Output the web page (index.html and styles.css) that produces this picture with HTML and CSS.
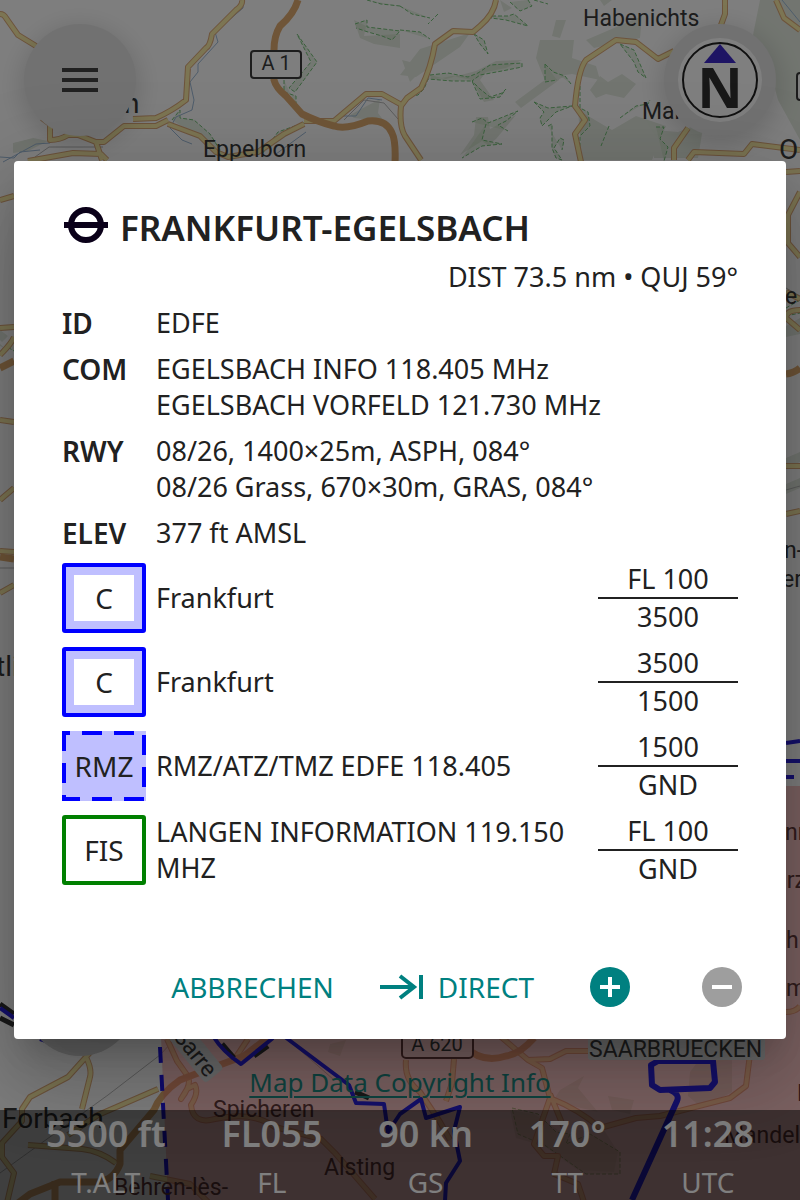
FILE: index.html
```html
<!DOCTYPE html>
<html lang="de">
<head>
<meta charset="utf-8">
<meta name="viewport" content="width=device-width, initial-scale=1">
<title>Frankfurt-Egelsbach</title>
<link rel="stylesheet" href="styles.css">
</head>
<body>
<div class="app">
  <svg class="map" viewBox="0 0 800 1200" preserveAspectRatio="xMidYMid slice" aria-hidden="true">
    <!-- woodland -->
    <g class="wood">
      <path d="M354 20l12 6-2 10 36-2v14l-26-4-14-6zM400 75l20-26 50-16-10 14-44 30zM402 60l24 6-16 16zM556 20l10 0-6 18-8-2zM586 40l56-24-2 22-46 10zM540 40l34 0-2 18 24 8 4 14-28-6-28 4-8-20zM515 102l46-34-2 12-38 28zM590 90l10-14 8 6 14-8 14 10-12 14-18-4-10 4zM760 0h40v140l-22-40-8-30-20-20zM578 110l34 20 24-14 30 10-14 34-70 0zM654 130l24 2 26-10-6 36h-44zM500 0l12 8-8 4zM600 0l12 0-8 6zM13 143l20-5 15 3-20 10-15 2zM350 115l30-16-2 14 6 8-30-3zM690 60l10 4 4-14-12 0z"/>
      <path d="M430 75l16 4 30-8 20-10 26-1-16 8-20 4-6 8 14 20-10 2-12-22-20-4-20 4zM476 117l12 0 2 12 26-14-20 24-8 6-6-4-22 14 14-20zM544 64l6 10 16 2-18 8-4-6z"/>
      <path d="M0 330l8 6-6 6-2-2zM0 344l6 5-6-3zM786 326l14-8v16l-14 3zM786 458l14-6v10l-14 6zM786 484l14-6v10l-14 6z"/>
      <path d="M560 1090l24-14-6 12 20 24-34-8-14 2zM690 1072l12-16 30-6v42l-30 16-14-12zM608 1096l26 4-4 14-18-4zM510 1110l24 4 24 16 46 0 14 22-4 20-36-2-34-24-28-8zM330 1044l16-4-6 16-12-4z"/>
    </g>
    <g class="park">
      <path d="M297 34l20 28-22 30-6-4 22-26zM367 0l14 4 19 2M355 24l12-4v7l33 4-8 9-10-4-14-4-12-4M400 6l12 8 18 4M400 30l20 2 10 7M438 14l-10 10M492 16l16 0 6-2 14 12-22-6-15-2zM510 2l10 9 12-5-4-6M534 0l14 4M474 34l10 6 4 14-8-10zM430 75l18-2 20 4 10-4 12-8 32-2v4l-20 4-22 4-8 6 8 8 10 8 12-4 4-4-6 8-20 2-8-18-20 0-24-2-4 10-6 6-10 2M545 64l8 8 12 4 6 8M545 64v18l12-2M534 102l14 6 24-2-16 6-14 14-2-8 4-6zM472 122l10-4 6 5 30-12-12 10-8 4 10 6M486 124l-4 16 20 4-20 2-20 12M548 126l4-2v24l4 10 6 2-8-12 6-10 4 2-2 10M580 86l0 22 8 4 2 14-10 10v24M609 126l-8 20M620 118l16-12 12-2 2-4M620 44l14 6 6 14 6 14-8-6-4-10zM656 127l8 0-4 12 8 8-4 14"/>
      <path d="M284 80v12l12 4v10M172 120l8-10 0 8 14 2 16 14 10 16M262 154l16-22 28-10M786 308l14-8M786 316l14-3M13 342l-4 6 5 3M512 1108l26 6 18 18 14 2-4 10 24-10 30 18v22l-34 0-40-28-28-12z"/>
    </g>
    <g class="stream">
      <path d="M243 0v8l-28 24 3 10-20 22v8l-8 10 4 18-2 10-16 7-6 11 12 12 10 4M3 162l33-18 14-1M0 157l14 1 6-6 20-2M782 0l18 22M276 154l30-22M342 116l14 0 12-18 14 2"/>
    </g>
    <path class="rail" d="M35 157l14-10h54M344 120l20-20 20 3 14 16M0 568h20M786 288l14 8M786 490l14-4M0 1173l108-78 52-40 24-26M284 1036l50 44"/>

    <!-- secondary roads: casing below, fill above -->
    <g class="road-edge">
      <path d="M0 14q4 0 6 4l12 17 18 11M242 0q1 5-6 10l-24 24q-2 12-6 14l-18 19-2 33q-14 11-30 18l-23 1M168 120l-12 6-32 0-20 16h-8l-18-7H68q-8 5-18 5V124l-8-6M96 142l6 18M28 161l45-8 28 1 6 6M168 124l32 12 16 16 12 5 30-5 26-18 20-10M304 121h30l32-27h16l18 10M496 0q-2 14-16 26l-7 6-20-1-18 13q-4 24-14 44l-14 10-6 8q-2 20 4 30l16 24M725 0v14l-4 11M674 51l-16 8-22-17-20-2-30 20q-8 10-11 46l10 14-10 14 6 28M776 0l8 18 16 12M688 128l-14 20v12M688 160l6-8 50 2 8-10 48 6"/>
      <path d="M0 200l14-4M0 328l14-1M0 355q12-12 14-18M0 420l14 2M0 500l14-12M0 551l14 1M0 593l14-8M786 172l14-1M800 192l-12 23v28l12 14M786 292l14 7M800 310q-14 0-14 8l14 12M786 466l14 0M786 514l14-3"/>
      <path d="M102 1039l-16 18-18 20-38 20-8 12v12l-20 22v14l12 16-8 34M86 1057q6 12 4 20l-8 32M28 1145l54 4q18 2 34 14M158 1089l-60 26-30 20M167 1039l10 22 10 14q6 8-6 24l6-10 8-4q4 8-4 20 2 20 24 14 38-8 60 8l46 12 14 14 40 46M248 1039l-12 18M500 1036l28 24 14 8 8 30q30 12 50 30l36-10 24-2 70-18 16-12 4-32 4-24M528 1060l22-1 16-8h24M550 1098l-16 46 10 12 14 0-4 18 24 10 6 18M550 1094l14 34M406 1060q-2 20 14 32l20 30 10 18M454 1059l-2 24-6 18M786 1012q10 0 14-6M150 1176l40 8 20 20"/>
    </g>
    <g class="road">
      <path d="M0 14q4 0 6 4l12 17 18 11M242 0q1 5-6 10l-24 24q-2 12-6 14l-18 19-2 33q-14 11-30 18l-23 1M168 120l-12 6-32 0-20 16h-8l-18-7H68q-8 5-18 5V124l-8-6M96 142l6 18M28 161l45-8 28 1 6 6M168 124l32 12 16 16 12 5 30-5 26-18 20-10M304 121h30l32-27h16l18 10M496 0q-2 14-16 26l-7 6-20-1-18 13q-4 24-14 44l-14 10-6 8q-2 20 4 30l16 24M725 0v14l-4 11M674 51l-16 8-22-17-20-2-30 20q-8 10-11 46l10 14-10 14 6 28M776 0l8 18 16 12M688 128l-14 20v12M688 160l6-8 50 2 8-10 48 6"/>
      <path d="M0 200l14-4M0 328l14-1M0 355q12-12 14-18M0 420l14 2M0 500l14-12M0 551l14 1M0 593l14-8M786 172l14-1M800 192l-12 23v28l12 14M786 292l14 7M800 310q-14 0-14 8l14 12M786 466l14 0M786 514l14-3"/>
      <path d="M102 1039l-16 18-18 20-38 20-8 12v12l-20 22v14l12 16-8 34M86 1057q6 12 4 20l-8 32M28 1145l54 4q18 2 34 14M158 1089l-60 26-30 20M167 1039l10 22 10 14q6 8-6 24l6-10 8-4q4 8-4 20 2 20 24 14 38-8 60 8l46 12 14 14 40 46M248 1039l-12 18M500 1036l28 24 14 8 8 30q30 12 50 30l36-10 24-2 70-18 16-12 4-32 4-24M528 1060l22-1 16-8h24M550 1098l-16 46 10 12 14 0-4 18 24 10 6 18M550 1094l14 34M406 1060q-2 20 14 32l20 30 10 18M454 1059l-2 24-6 18M786 1012q10 0 14-6M150 1176l40 8 20 20"/>
    </g>
    <path class="motorway" d="M298 0q-4 14-18 26-6 10-6 24v30q2 8 12 16l16 18q16 8 32 12 12 4 34-5 18-2 24 12 4 8 3 30M0 368l14-7M0 557l14 2M800 368q-6 5-14 6M270 1036l-26 20-38 14-26 10q-20 14-26 30l-34 40v14q-6 16-22 18H60l-30 12-16 12M464 1046q18 18 42 10 14-2 28-18M55 1181v19"/>

    <!-- control zone -->
    <path class="zone" d="M161 1036l7 164h632V786h-14v250z"/>
    <path class="zone-dash" d="M160 1047l8 153"/>
    <path class="dark-line" d="M0 1004l14 10M0 1018l14 7M222 1044l12 14M254 1056l14-10M355 1092l14 6"/>
    <path class="border" d="M0 1008l14 10M40 1039l9 3 7-5M213 1036q10 16 28 28l32-26M285 1037l64 48 7 18 28 1 4 28 12-18 21-15 5 19 34-11-6 24 6 30-14 22-1 18"/>
    <path class="border" d="M786 743l14-2M786 761h14M786 777h8"/>
    <path class="circuit" d="M658 1061l-7 4 1 20 8 5 50-2 5-6-2-21zM670 1090q10 4 7 11l-45 99"/>

    <g class="places">
      <text x="583" y="26">Habenichts</text>
      <text x="203" y="157">Eppelborn</text>
      <text class="large" x="124" y="113">n</text>
      <text x="642" y="119">Mar</text>
      <text x="753" y="119">r</text>
      <text class="large" x="779" y="159">O</text>
      <text x="785" y="304">e</text>
      <text x="784" y="558">n-</text>
      <text x="782" y="587">erg</text>
      <text class="large" x="-4" y="676">tli</text>
      <text class="faint" x="785" y="840">nn</text>
      <text class="faint" x="774" y="888">ürz</text>
      <text class="faint" x="786" y="948">h</text>
      <text class="faint" x="786" y="996">m</text>
      <text class="faint" x="213" y="1117">Spicheren</text>
      <text class="large" x="2" y="1128">Forbach</text>
      <text class="faint" x="324" y="1175">Alsting</text>
      <text class="faint" x="114" y="1195">Behren-lès-</text>
      <text class="faint" x="724" y="1143">Mandel</text>
      <text class="faint" x="797" y="1101">F</text>
      <g transform="rotate(51 190 1052)">
        <rect class="halo" x="162" y="1036" width="62" height="24" rx="4"/>
        <text x="167" y="1056">Sarre</text>
      </g>
      <rect class="halo" x="588" y="1037" width="177" height="23" rx="3"/>
      <text x="589" y="1057">SAARBRUECKEN</text>
    </g>
    <g class="shields">
      <rect x="251" y="51" width="50" height="27" rx="3"/>
      <text x="276" y="70">A 1</text>
      <rect x="797" y="73" width="20" height="27" rx="3"/>
      <rect class="tinted" x="402" y="1030" width="71" height="28" rx="4"/>
      <text x="437" y="1051">A 620</text>
    </g>
    <circle class="disc" cx="80" cy="1000" r="56"/>
  </svg>

  <header class="toolbar">
    <button class="round" type="button" aria-label="Menu">
      <svg width="36" height="24" viewBox="0 0 36 24" aria-hidden="true"><path class="ink" d="M0 0h36v4H0zM0 10h36v4H0zM0 20h36v4H0z"/></svg>
    </button>
    <button class="round" type="button" aria-label="North up">
      <svg width="84" height="84" viewBox="0 0 84 84" aria-hidden="true">
        <circle class="dial" cx="42" cy="42" r="42"/>
        <circle class="ring" cx="42" cy="42" r="37"/>
        <path class="needle" d="M42 6l16 19H26z"/>
        <text class="north" x="42" y="70">N</text>
      </svg>
    </button>
  </header>

  <footer class="status">
    <a class="copyright" href="#copyright">Map Data Copyright Info</a>
    <dl class="readings">
      <div class="reading"><dd>5500 ft</dd><dt>T.ALT</dt></div>
      <div class="reading"><dd>FL055</dd><dt>FL</dt></div>
      <div class="reading"><dd>90 kn</dd><dt>GS</dt></div>
      <div class="reading"><dd>170°</dd><dt>TT</dt></div>
      <div class="reading"><dd>11:28</dd><dt>UTC</dt></div>
    </dl>
  </footer>

  <div class="backdrop">
    <section class="dialog" role="dialog" aria-modal="true" aria-labelledby="title">
      <h1 class="title">
        <svg class="airfield" width="44" height="36" viewBox="0 0 44 36" aria-hidden="true"><g class="field"><circle cx="22" cy="18" r="15"/><path d="M0 18h44"/></g></svg>
        <span id="title">FRANKFURT-EGELSBACH</span>
      </h1>
      <p class="bearing">DIST 73.5 nm • QUJ 59°</p>
      <table class="facts">
        <tr><th scope="row">ID</th><td>EDFE</td></tr>
        <tr><th scope="row">COM</th><td>EGELSBACH INFO 118.405 MHz<br>EGELSBACH VORFELD 121.730 MHz</td></tr>
        <tr><th scope="row">RWY</th><td>08/26, 1400×25m, ASPH, 084°<br>08/26 Grass, 670×30m, GRAS, 084°</td></tr>
        <tr><th scope="row">ELEV</th><td>377 ft AMSL</td></tr>
      </table>
      <ul class="airspaces">
        <li class="airspace">
          <span class="badge controlled">C</span>
          <span class="name">Frankfurt</span>
          <span class="levels"><span class="upper">FL 100</span><span>3500</span></span>
        </li>
        <li class="airspace">
          <span class="badge controlled">C</span>
          <span class="name">Frankfurt</span>
          <span class="levels"><span class="upper">3500</span><span>1500</span></span>
        </li>
        <li class="airspace">
          <span class="badge radio">
            <svg class="dashes" width="84" height="70" viewBox="0 0 84 70" aria-hidden="true"><path d="M2 2v66h80V2z"/></svg>
            <span class="code">RMZ</span>
          </span>
          <span class="name">RMZ/ATZ/TMZ EDFE 118.405</span>
          <span class="levels"><span class="upper">1500</span><span>GND</span></span>
        </li>
        <li class="airspace">
          <span class="badge info">FIS</span>
          <span class="name">LANGEN INFORMATION 119.150 MHZ</span>
          <span class="levels"><span class="upper">FL 100</span><span>GND</span></span>
        </li>
      </ul>
      <div class="actions">
        <button class="action" type="button">ABBRECHEN</button>
        <button class="action direct" type="button">
          <svg width="44" height="26" viewBox="0 0 44 26" aria-hidden="true"><path class="arrow" d="M0 13h34M20 2l14 11-14 11M41 1v24"/></svg>
          DIRECT
        </button>
        <button class="action icon" type="button" aria-label="Add">
          <svg width="40" height="40" viewBox="0 0 40 40" aria-hidden="true"><circle class="teal" cx="20" cy="20" r="20"/><path class="sign" d="M10 20h20M20 10v20"/></svg>
        </button>
        <button class="action icon" type="button" aria-label="Remove" disabled>
          <svg width="40" height="40" viewBox="0 0 40 40" aria-hidden="true"><circle class="grey" cx="20" cy="20" r="20"/><path class="sign" d="M10 20h20"/></svg>
        </button>
      </div>
    </section>
  </div>
</div>
</body>
</html>
```
FILE: styles.css
```css
* { box-sizing: border-box; }

body {
  margin: 0;
  color: #212121;
  font: 28px/36px "Noto Sans", sans-serif;
}

.app {
  position: relative;
  display: flex;
  flex-direction: column;
  justify-content: space-between;
  min-height: 100vh;
  overflow: hidden;
  background: #fdfdfd;
}

button {
  margin: 0;
  padding: 0;
  border: 0;
  background: none;
  font: inherit;
  cursor: pointer;
}

svg { display: block; flex: none; }

/* Map */
.map { position: absolute; inset: 0; width: 100%; height: 100%; }
.map path { fill: none; stroke-linejoin: round; }
.map .wood path { fill: #e4ebe0; }
.map .park path { fill: rgba(190, 215, 180, .35); stroke: #74c078; stroke-width: 1; stroke-dasharray: 4 2; }
.map .stream path { stroke: #9db9d6; stroke-width: 1; }
.map .rail { stroke: #b8b8b8; stroke-width: 1; }
.road-edge path { stroke: #dba878; stroke-width: 6; }
.road path { stroke: #f8eaa6; stroke-width: 4; }
.map .motorway { stroke: #dfaa70; stroke-width: 7; }
.map .zone { fill: rgba(244, 120, 120, .42); }
.map .zone-dash { stroke: #1e14e0; stroke-width: 4; stroke-dasharray: 16 12; }
.map .dark-line { stroke: #333; stroke-width: 5; }
.map .border { stroke: #2a20d8; stroke-width: 4; }
.map .circuit { stroke: #2a20d8; stroke-width: 6; }
.places text { fill: #3a3a3a; font: 23px Roboto, sans-serif; }
.places .large { font-size: 28px; }
.places .faint { fill: #643a3a; }
.halo { fill: #d8d8d8; }
.shields rect { fill: #fdfdfd; stroke: #3a3a3a; stroke-width: 2; }
.shields .tinted { fill: #f5c5c5; stroke: #643a3a; }
.shields text { fill: #3a3a3a; font: 20px Roboto, sans-serif; text-anchor: middle; }
.disc { fill: #d0d0d0; }

/* Floating map buttons */
.toolbar {
  position: relative;
  display: flex;
  justify-content: space-between;
  padding: 24px;
}

.round {
  display: flex;
  align-items: center;
  justify-content: center;
  width: 112px;
  height: 112px;
  border-radius: 50%;
  background: #e2e2e2;
  box-shadow: 0 6px 24px 4px rgba(0, 0, 0, .14);
}

.ink { fill: #424242; }
.dial { fill: #fff; }
.ring { fill: none; stroke: #212121; stroke-width: 2; }
.needle { fill: #3d28c8; }
.north { fill: #303030; font: 700 56px "Noto Sans", sans-serif; text-anchor: middle; }

/* Flight readings */
.status { position: relative; text-align: center; }
.copyright {
  display: inline-block;
  margin-bottom: 10px;
  color: #1f8c84;
  font-size: 26px;
  text-decoration-thickness: 2px;
  text-underline-offset: 4px;
}

.readings {
  display: flex;
  justify-content: space-between;
  margin: 0;
  padding: 0 46px;
  color: #fff;
  background: rgba(0, 0, 0, .5);
}

.reading dd { margin: 0 0 6px; font-size: 36px; font-weight: 600; line-height: 48px; }

/* Dialog */
.backdrop {
  position: absolute;
  inset: 0;
  display: flex;
  align-items: center;
  padding: 14px;
  background: rgba(0, 0, 0, .5);
}

.dialog {
  flex: 1;
  padding: 40px 44px 32px 48px;
  border-radius: 4px;
  background: #fff;
  box-shadow: 0 22px 30px -14px rgba(0, 0, 0, .2), 0 48px 76px 6px rgba(0, 0, 0, .14), 0 18px 92px 16px rgba(0, 0, 0, .12);
}

.title {
  display: flex;
  align-items: center;
  gap: 12px;
  margin: 0;
  padding-left: 2px;
  font-size: 35px;
  font-weight: 600;
  line-height: 53px;
}

.airfield { margin-bottom: 6px; }
.field { fill: none; stroke: #0a0019; stroke-width: 6; }
.bearing { margin: 0 4px 0 0; padding: 5px 0; font-size: 27px; text-align: right; }

.facts { border-collapse: collapse; }
.facts th { width: 94px; padding: 5px 0; font-weight: 600; text-align: left; vertical-align: top; }
.facts td { padding: 5px 0; font-size: 27px; }

.airspaces { margin: 0 4px 0 0; padding: 0; list-style: none; }
.airspace { display: flex; align-items: center; gap: 10px; height: 84px; }
.badge {
  position: relative;
  display: flex;
  flex: none;
  align-items: center;
  justify-content: center;
  width: 84px;
  height: 70px;
}

.controlled { border: 4px solid #00f; border-radius: 3px; box-shadow: inset 0 0 0 8px #bfbfff; }
.radio { background: #bfbfff; }
.info { border: 4px solid #008000; border-radius: 3px; }
.dashes { position: absolute; inset: 0; fill: none; stroke: #00f; stroke-width: 4; stroke-dasharray: 20 12; stroke-dashoffset: 2; }
.code { position: relative; }
.name { flex: 1; font-size: 27px; }
.levels { display: flex; flex-direction: column; width: 140px; font-size: 27px; text-align: center; }
.upper { border-bottom: 2px solid #212121; }

.actions {
  display: flex;
  align-items: center;
  justify-content: flex-end;
  margin-top: 75px;
}

.action { display: flex; align-items: center; height: 40px; color: #008080; }
.direct { gap: 14px; margin: 0 56px 0 46px; }
.icon + .icon { margin-left: 72px; }
.arrow { fill: none; stroke: #008080; stroke-width: 4; }
.teal { fill: #008080; }
.grey { fill: #9e9e9e; }
.sign { fill: none; stroke: #fff; stroke-width: 4; }
```
